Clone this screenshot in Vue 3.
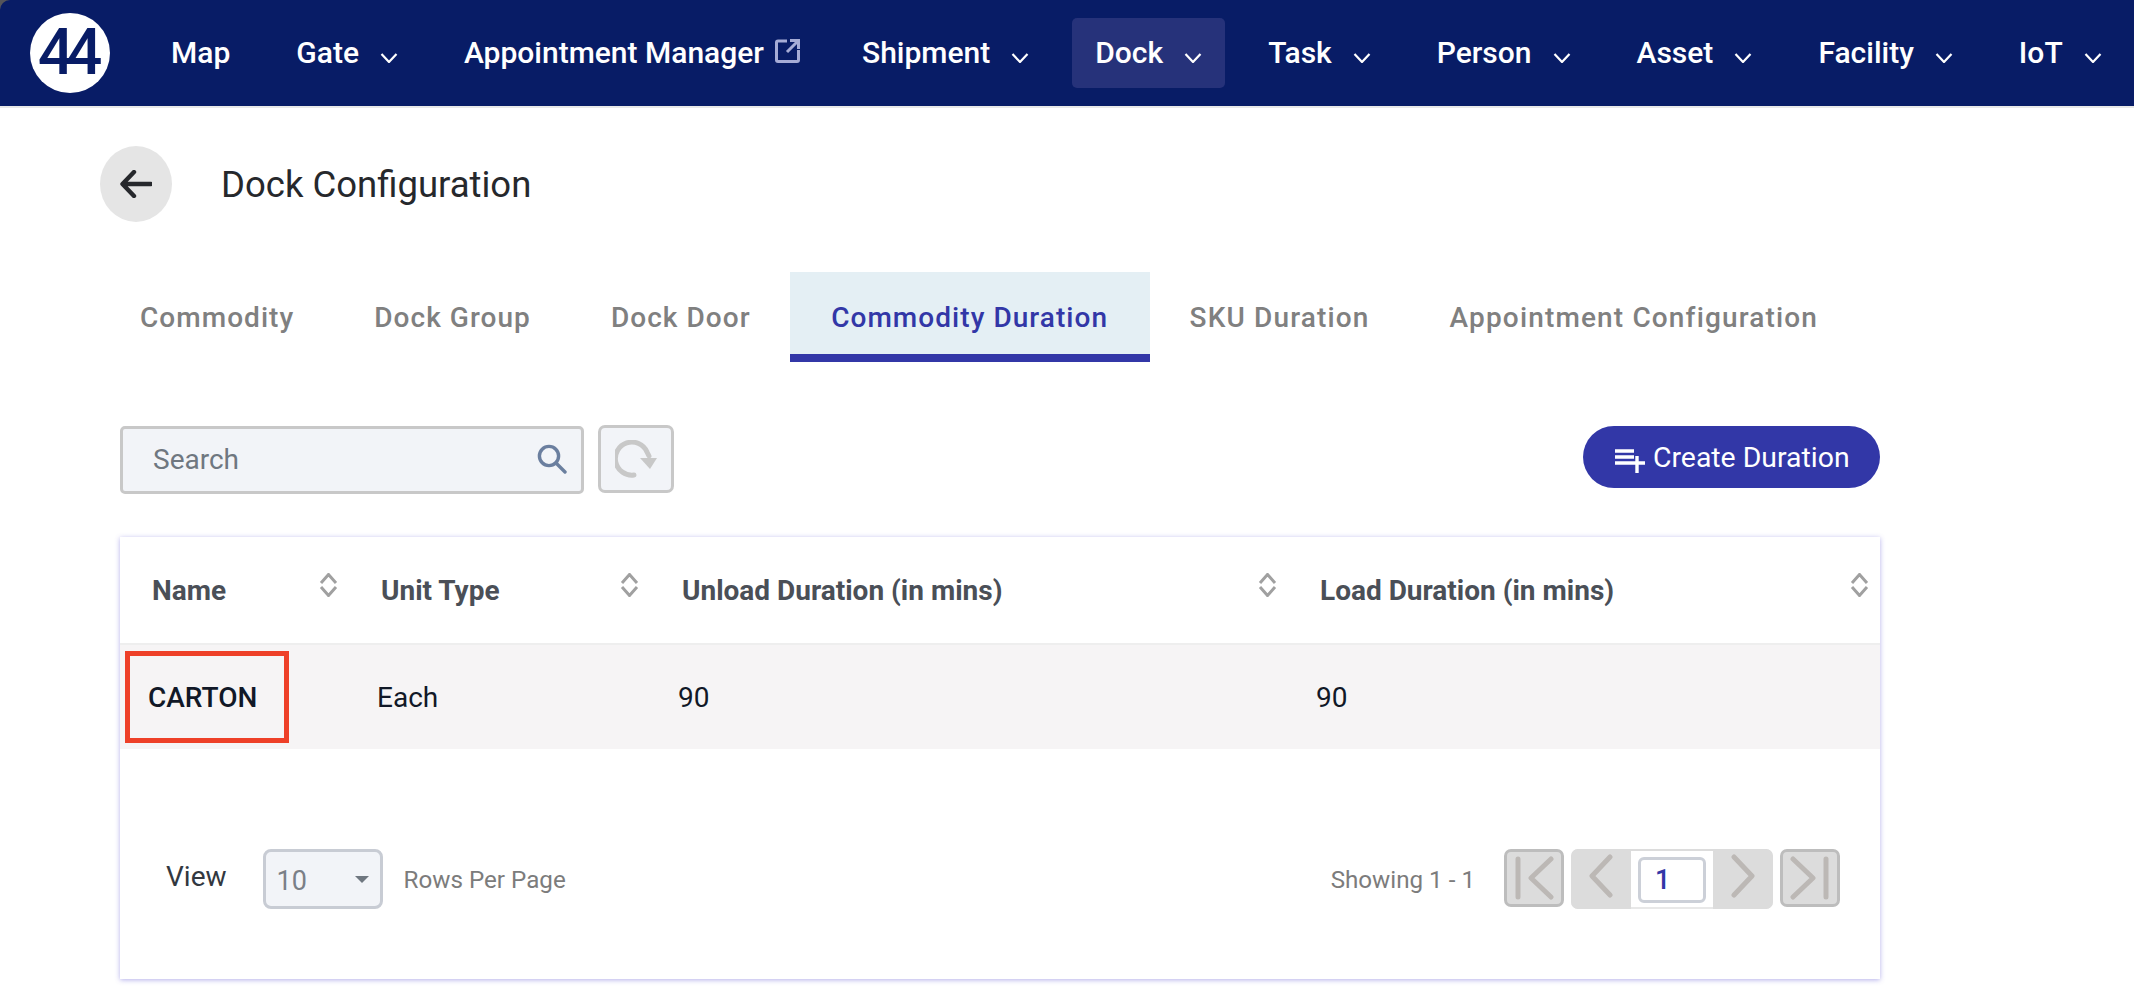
<script setup>
const navItems = [
  { label: 'Map' },
  { label: 'Gate', caret: true },
  { label: 'Appointment Manager', external: true },
  { label: 'Shipment', caret: true },
  { label: 'Dock', caret: true, active: true },
  { label: 'Task', caret: true },
  { label: 'Person', caret: true },
  { label: 'Asset', caret: true },
  { label: 'Facility', caret: true },
  { label: 'IoT', caret: true }
]
const tabs = ['Commodity', 'Dock Group', 'Dock Door', 'Commodity Duration', 'SKU Duration', 'Appointment Configuration']
const columns = ['Name', 'Unit Type', 'Unload Duration (in mins)', 'Load Duration (in mins)']
</script>

<template>
  <div class="app">
    <div class="corner">
      <header class="topbar">
        <div class="logo">44</div>
        <nav class="nav">
          <a v-for="item in navItems" :key="item.label" class="nav-item" :class="{ active: item.active }">
            <span>{{ item.label }}</span>
            <svg v-if="item.caret" class="caret" viewBox="0 0 18 10" width="18" height="10">
              <path d="M1.5 1 L9 9 L16.5 1" fill="none" stroke="#fff" stroke-width="2.2" />
            </svg>
            <svg v-if="item.external" class="external" viewBox="0 0 25 24" width="25" height="24">
              <path d="M12 2 H3 A1.5 1.5 0 0 0 1.5 3.5 V21 A1.5 1.5 0 0 0 3 22.5 H22 A1.5 1.5 0 0 0 23.5 21 V11" fill="none" stroke="#a6acd6" stroke-width="3" />
              <path d="M12 13 L22 3 M15 1.5 H23.5 V10" fill="none" stroke="#a6acd6" stroke-width="3" />
            </svg>
          </a>
        </nav>
      </header>
    </div>

    <main class="page">
      <div class="title-row">
        <button class="back">
          <svg viewBox="0 0 32 28" width="32" height="28">
            <path d="M14 2 L2.5 14 L14 26 M3 14 H31" fill="none" stroke="#26282c" stroke-width="4.4" stroke-linecap="round" stroke-linejoin="round" />
          </svg>
        </button>
        <h1>Dock Configuration</h1>
      </div>

      <div class="tabs">
        <div v-for="tab in tabs" :key="tab" class="tab" :class="{ current: tab === 'Commodity Duration' }">{{ tab }}</div>
      </div>

      <div class="toolbar">
        <div class="search">
          <span>Search</span>
          <svg viewBox="0 0 30 30" width="30" height="30">
            <circle cx="12" cy="12" r="9.6" fill="none" stroke="#6b7f9f" stroke-width="3.4" />
            <path d="M19 19 L28 28" stroke="#6b7f9f" stroke-width="3.4" stroke-linecap="round" />
          </svg>
        </div>
        <button class="refresh">
          <svg viewBox="0 0 42 38" width="42" height="38">
            <path d="M19 35 A16.5 16.5 0 1 1 32 12 L34 16" fill="none" stroke="#c8c8c8" stroke-width="5" stroke-linecap="round" />
            <path d="M25 18 H42 L35 29 Z" fill="#c8c8c8" />
          </svg>
        </button>
        <button class="create">
          <svg viewBox="0 0 32 26" width="32" height="26">
            <path d="M1 3 H20 M1 9 H20 M1 15 H14 M14 15 H31 M23 8 V25" stroke="#fff" stroke-width="3.4" fill="none" />
          </svg>
          <span>Create Duration</span>
        </button>
      </div>

      <section class="card">
        <div class="head-row">
          <div v-for="col in columns" :key="col" class="head-cell">
            <span>{{ col }}</span>
            <svg viewBox="0 0 19 24" width="19" height="24">
              <path d="M2 10 L9.5 1.5 L17 10 M2 14 L9.5 22.5 L17 14" fill="none" stroke="#a0a0a0" stroke-width="3" />
            </svg>
          </div>
        </div>
        <div class="data-row">
          <div class="cell strong">CARTON<i class="marker"></i></div>
          <div class="cell">Each</div>
          <div class="cell">90</div>
          <div class="cell">90</div>
        </div>
        <footer class="pager">
          <span class="view">View</span>
          <div class="select"><span>10</span><i class="select-caret"></i></div>
          <span class="muted rows">Rows Per Page</span>
          <span class="muted showing">Showing 1 - 1</span>
          <button class="page-btn">
            <svg viewBox="0 0 40 44" width="40" height="44">
              <path d="M4 3 V41 M37 3 L17 22 L37 41" fill="none" stroke="#bcb8b5" stroke-width="5" stroke-linecap="round" stroke-linejoin="round" />
            </svg>
          </button>
          <div class="page-group">
            <button class="step left">
              <svg viewBox="0 0 24 44" width="24" height="44">
                <path d="M21 3 L3 22 L21 41" fill="none" stroke="#bcb8b5" stroke-width="5" stroke-linecap="round" stroke-linejoin="round" />
              </svg>
            </button>
            <div class="page-mid"><div class="page-input">1</div></div>
            <button class="step right">
              <svg viewBox="0 0 24 44" width="24" height="44">
                <path d="M3 3 L21 22 L3 41" fill="none" stroke="#bcb8b5" stroke-width="5" stroke-linecap="round" stroke-linejoin="round" />
              </svg>
            </button>
          </div>
          <button class="page-btn">
            <svg viewBox="0 0 40 44" width="40" height="44">
              <path d="M36 3 V41 M3 3 L23 22 L3 41" fill="none" stroke="#bcb8b5" stroke-width="5" stroke-linecap="round" stroke-linejoin="round" />
            </svg>
          </button>
        </footer>
      </section>
    </main>
  </div>
</template>

<style>
html, body { margin: 0; background: #fff; }
</style>

<style scoped>
.app {
  width: 2134px;
  height: 1004px;
  overflow: hidden;
  background: #fff;
  font-family: Roboto, "Liberation Sans", sans-serif;
}
.corner { background: #55555a; }
.topbar {
  height: 106px;
  border-bottom: 2px solid #e8e8e8;
  border-top-left-radius: 10px;
  background: #081c66;
  display: flex;
  align-items: center;
  padding-left: 30px;
}
.logo {
  width: 80px;
  height: 80px;
  border-radius: 50%;
  background: #fff;
  color: #081c66;
  font-size: 64px;
  font-weight: 500;
  letter-spacing: -8px;
  line-height: 80px;
  text-align: center;
  text-indent: -8px;
  flex: none;
}
.nav {
  display: flex;
  gap: 20px;
  margin-left: 38px;
  height: 70px;
}
.nav-item {
  display: flex;
  align-items: center;
  height: 70px;
  padding: 0 23px 2px;
  border-radius: 5px;
  color: #fff;
  font-size: 30px;
  font-weight: 500;
  white-space: nowrap;
  box-sizing: border-box;
}
.nav-item.active { background: #26327a; }
.caret { margin-left: 21px; margin-top: 12px; }
.external { margin: -3px -4px 0 11px; }
.page { padding: 38px 0 0 100px; }
.title-row { display: flex; align-items: center; }
.back {
  width: 72px;
  height: 76px;
  border: 0;
  padding: 0;
  border-radius: 50%;
  background: #e5e5e5;
  display: flex;
  align-items: center;
  justify-content: center;
}
h1 {
  margin: 0 0 0 49px;
  font-size: 36.5px;
  font-weight: 400;
  color: #26282c;
}
.tabs { display: flex; margin-top: 50px; height: 90px; }
.tab {
  box-sizing: border-box;
  height: 90px;
  padding: 0 40px;
  line-height: 92px;
  font-size: 28px;
  font-weight: 500;
  letter-spacing: 1.05px;
  color: #808080;
  white-space: nowrap;
}
.tab.current {
  margin-left: -1px;
  padding: 0 41.5px;
  background: #e4eff4;
  color: #3237a7;
  border-bottom: 8px solid #3237a7;
}
.tab.current ~ .tab { letter-spacing: 1.15px; }
.toolbar {
  display: flex;
  align-items: flex-start;
  width: 1760px;
  margin: 63px 0 0 20px;
  height: 112px;
}
.search {
  box-sizing: border-box;
  width: 464px;
  height: 68px;
  margin-top: 1px;
  padding: 0 14px 2px 30px;
  display: flex;
  align-items: center;
  justify-content: space-between;
  background: #f2f4f8;
  border: 3px solid #c8c8c8;
  border-radius: 5px;
  color: #6f7780;
  font-size: 28px;
}
.refresh {
  box-sizing: border-box;
  width: 76px;
  height: 68px;
  margin-left: 14px;
  padding: 0;
  display: flex;
  align-items: center;
  justify-content: center;
  background: #f2f4f8;
  border: 3px solid #c8c8c8;
  border-radius: 7px;
}
.create {
  margin-left: auto;
  margin-top: 1px;
  width: 297px;
  height: 62px;
  padding: 0 0 0 31px;
  border: 0;
  border-radius: 31px;
  background: #3237a7;
  color: #fff;
  font-family: inherit;
  font-size: 28.4px;
  display: flex;
  align-items: center;
  gap: 7px;
  white-space: nowrap;
}
.create svg { margin-top: 8px; }
.card {
  width: 1760px;
  height: 442px;
  margin-left: 20px;
  background: #fff;
  box-shadow: 0 1px 5px rgba(88, 80, 210, 0.45);
  display: flex;
  flex-direction: column;
}
.head-row, .data-row {
  display: grid;
  grid-template-columns: 229px 301px 638px 592px;
}
.head-row {
  height: 106px;
  border-bottom: 2px solid #eeeeee;
}
.head-cell {
  display: flex;
  align-items: center;
  justify-content: space-between;
  padding: 0 11px 0 32px;
  color: #4a4f57;
  font-size: 28px;
  font-weight: 700;
  white-space: nowrap;
}
.head-cell svg { margin-top: -10px; }
.data-row { height: 104px; background: #f6f4f5; }
.cell {
  position: relative;
  display: flex;
  align-items: center;
  padding-left: 28px;
  font-size: 28px;
  color: #111827;
}
.strong { font-weight: 500; }
.marker {
  position: absolute;
  left: 5px;
  top: 6px;
  width: 164px;
  height: 92px;
  box-sizing: border-box;
  border: 5px solid #ee4028;
}
.pager {
  flex: 1;
  display: flex;
  align-items: center;
  padding: 30px 40px 0 46px;
}
.view { font-size: 28px; color: #333840; margin-top: -6px; }
.select {
  box-sizing: border-box;
  width: 120px;
  height: 60px;
  margin-left: 36px;
  padding: 3px 11px 0 11px;
  display: flex;
  align-items: center;
  justify-content: space-between;
  background: #f2f4f8;
  border: 3px solid #c8ccd4;
  border-radius: 8px;
  color: #7a7f87;
  font-size: 27px;
}
.select-caret {
  width: 0;
  height: 0;
  margin-top: -3px;
  border-left: 7px solid transparent;
  border-right: 7px solid transparent;
  border-top: 7px solid #6f7780;
}
.muted { color: #7c7c7c; font-size: 24.2px; margin-top: 2px; }
.rows { margin-left: 21px; }
.showing { margin-left: auto; margin-right: 29px; }
.page-btn {
  box-sizing: border-box;
  width: 60px;
  height: 58px;
  padding: 0;
  display: flex;
  align-items: center;
  justify-content: center;
  background: #dcdcdc;
  border: 3px solid #bdbdbd;
  border-radius: 7px;
  margin-top: -2px;
}
.page-group {
  display: flex;
  width: 202px;
  height: 60px;
  margin: 0 7px;
  border-radius: 7px;
  background: #dcdcdc;
  overflow: hidden;
}
.step {
  flex: none;
  width: 60px;
  height: 60px;
  padding: 0 0 6px;
  border: 0;
  background: #dcdcdc;
  display: flex;
  align-items: center;
  justify-content: center;
  border-radius: 7px;
}
.page-mid {
  flex: 1;
  background: #fff;
  border-top: 2px solid #dcdcdc;
  border-bottom: 2px solid #e8e8e8;
  display: flex;
  justify-content: center;
  align-items: flex-start;
  padding-top: 6px;
  box-sizing: border-box;
}
.page-input {
  box-sizing: border-box;
  width: 68px;
  height: 46px;
  padding-left: 14px;
  border: 3px solid #ccd0d8;
  border-radius: 6px;
  background: #fff;
  color: #3237a7;
  font-size: 27px;
  font-weight: 500;
  line-height: 40px;
}
</style>
